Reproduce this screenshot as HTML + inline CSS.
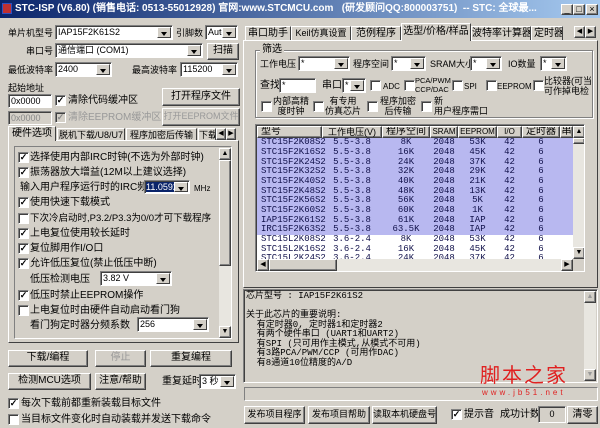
<!DOCTYPE html><html><head><meta charset="utf-8"><style>
*{box-sizing:border-box;margin:0;padding:0}
body{width:600px;height:428px;background:#d4d0c8;font:10px "Liberation Sans","WenQuanYi Zen Hei",sans-serif;color:#000;position:relative;overflow:hidden}
.a{position:absolute;white-space:nowrap;line-height:12px}
.btn{position:absolute;background:#d4d0c8;border:1px solid;border-color:#fff #404040 #404040 #fff;box-shadow:inset -1px -1px 0 #808080;text-align:center;font-size:10px;white-space:nowrap;overflow:hidden}
.sk{position:absolute;background:#fff;border:1px solid;border-color:#808080 #fff #fff #808080;box-shadow:inset 1px 1px 0 #404040;padding:1px 2px;font-size:9px;line-height:11px;white-space:nowrap;overflow:hidden}
.cb{position:absolute;width:11px;height:11px;background:#fff;border:1px solid;border-color:#808080 #fff #fff #808080;box-shadow:inset 1px 1px 0 #404040;font-size:9px;line-height:9px;text-align:center;font-weight:bold}
.ar{position:absolute;right:1px;top:1px;bottom:1px;width:14px;background:#d4d0c8;border:1px solid;border-color:#fff #404040 #404040 #fff}
.ar:after{content:"";position:absolute;left:3px;top:4px;border:3px solid transparent;border-top:4px solid #000}
.grp{position:absolute;border:1px solid #808080;box-shadow:1px 1px 0 #fff,inset 1px 1px 0 #fff}
.tab{position:absolute;background:#d4d0c8;border:1px solid;border-bottom:none;border-color:#fff #404040 #404040 #fff;text-align:center;font-size:10px;line-height:13px;white-space:nowrap;overflow:hidden}
table{border-collapse:collapse;font:9px "Liberation Mono","WenQuanYi Zen Hei",monospace}
td{height:9.67px;padding:0;text-align:center;line-height:9px;color:#10104a}
td:first-child{text-align:left;padding-left:4px}
tr.s td{background:#b8b8f0}
</style></head><body>
<div class="a" style="left:0;top:0;width:600px;height:18px;background:linear-gradient(90deg,#0a246a,#a6caf0)"></div>
<div class="a" style="left:2px;top:3px;width:10px;height:11px;background:#c03030;border:1px solid #3050c0"></div>
<div class="a" style="left:15px;top:3px;color:#fff;font-weight:bold;font-size:10px">STC-ISP (V6.80) (销售电话: 0513-55012928) 官网:www.STCMCU.com&nbsp;&nbsp; (研发顾问QQ:800003751)&nbsp; -- STC: 全球最...</div>
<div class="btn" style="left:561px;top:4px;width:12px;height:11px;font-size:9px;line-height:9px">_</div>
<div class="btn" style="left:573px;top:4px;width:12px;height:11px;font-size:9px;line-height:9px">□</div>
<div class="btn" style="left:586px;top:4px;width:12px;height:11px;font-size:9px;line-height:9px">×</div>

<div class="a" style="left:8px;top:27px;font-size:9px">单片机型号</div>
<div class="sk" style="left:55px;top:25px;width:118px;height:15px">IAP15F2K61S2<div class="ar"></div></div>
<div class="a" style="left:176px;top:27px;font-size:9px">引脚数</div>
<div class="sk" style="left:205px;top:25px;width:33px;height:15px">Auto<div class="ar"></div></div>
<div class="a" style="left:26px;top:45px;font-size:9px">串口号</div>
<div class="sk" style="left:55px;top:43px;width:148px;height:15px">通信端口 (COM1)<div class="ar"></div></div>
<div class="btn" style="left:207px;top:43px;width:32px;height:17px;line-height:14px">扫描</div>
<div class="a" style="left:8px;top:64px;font-size:9px">最低波特率</div>
<div class="sk" style="left:55px;top:62px;width:57px;height:15px">2400<div class="ar"></div></div>
<div class="a" style="left:132px;top:64px;font-size:9px">最高波特率</div>
<div class="sk" style="left:180px;top:62px;width:58px;height:15px">115200<div class="ar"></div></div>
<div class="a" style="left:8px;top:82px;font-size:9px">起始地址</div>
<div class="sk" style="left:8px;top:94px;width:44px;height:14px">0x0000</div>
<div class="cb" style="left:55px;top:95px">✓</div>
<div class="a" style="left:68px;top:95px">清除代码缓冲区</div>
<div class="btn" style="left:162px;top:88px;width:78px;height:18px;line-height:15px">打开程序文件</div>
<div class="sk" style="left:8px;top:111px;width:44px;height:14px;background:#d4d0c8;color:#888">0x0000</div>
<div class="cb" style="left:55px;top:112px;background:#d4d0c8;color:#888">✓</div>
<div class="a" style="left:68px;top:112px;color:#999">清除EEPROM缓冲区</div>
<div class="btn" style="left:162px;top:108px;width:78px;height:18px;line-height:15px;font-size:9px;color:#999">打开EEPROM文件</div>

<div class="tab" style="left:8px;top:126px;width:48px;height:15px;z-index:2">硬件选项</div>
<div class="tab" style="left:57px;top:128px;width:68px;height:13px;font-size:9px">脱机下载/U8/U7</div>
<div class="tab" style="left:126px;top:128px;width:71px;height:13px;font-size:9px">程序加密后传输</div>
<div class="tab" style="left:198px;top:128px;width:18px;height:13px;font-size:9px">下载</div>
<div class="btn" style="left:216px;top:128px;width:10px;height:12px;font-size:7px;line-height:10px">◀</div>
<div class="btn" style="left:226px;top:128px;width:10px;height:12px;font-size:7px;line-height:10px">▶</div>
<div class="a" style="left:8px;top:140px;width:231px;height:203px;border:1px solid;border-color:#fff #404040 #404040 #fff"></div>
<div class="a" style="left:14px;top:146px;width:218px;height:193px;border:1px solid;border-color:#808080 #fff #fff #808080"></div>
<div class="a" style="left:219px;top:148px;width:12px;height:190px;background:#e8e6e0"></div>
<div class="btn" style="left:219px;top:148px;width:12px;height:12px;font-size:7px;line-height:10px">▲</div>
<div class="btn" style="left:219px;top:160px;width:12px;height:106px"></div>
<div class="btn" style="left:219px;top:326px;width:12px;height:12px;font-size:7px;line-height:10px">▼</div>
<div class="cb" style="left:18px;top:152px">✓</div><div class="a" style="left:30px;top:152px">选择使用内部IRC时钟(不选为外部时钟)</div>
<div class="cb" style="left:18px;top:167px">✓</div><div class="a" style="left:30px;top:167px">振荡器放大增益(12M以上建议选择)</div>
<div class="a" style="left:20px;top:182px">输入用户程序运行时的IRC频率</div>
<div class="sk" style="left:144px;top:180px;width:46px;height:14px;padding:1px"><span style="background:#0a246a;color:#fff">11.0592</span><div class="ar"></div></div>
<div class="a" style="left:194px;top:183px;font-size:8px">MHz</div>
<div class="cb" style="left:18px;top:197px">✓</div><div class="a" style="left:30px;top:197px">使用快速下载模式</div>
<div class="cb" style="left:18px;top:213px"></div><div class="a" style="left:30px;top:213px;font-size:9.5px">下次冷启动时,P3.2/P3.3为0/0才可下载程序</div>
<div class="cb" style="left:18px;top:228px">✓</div><div class="a" style="left:30px;top:228px">上电复位使用较长延时</div>
<div class="cb" style="left:18px;top:243px">✓</div><div class="a" style="left:30px;top:243px">复位脚用作I/O口</div>
<div class="cb" style="left:18px;top:258px">✓</div><div class="a" style="left:30px;top:258px">允许低压复位(禁止低压中断)</div>
<div class="a" style="left:30px;top:274px">低压检测电压</div>
<div class="sk" style="left:100px;top:271px;width:72px;height:15px">3.82 V<div class="ar"></div></div>
<div class="cb" style="left:18px;top:290px">✓</div><div class="a" style="left:30px;top:290px">低压时禁止EEPROM操作</div>
<div class="cb" style="left:18px;top:305px"></div><div class="a" style="left:30px;top:305px">上电复位时由硬件自动启动看门狗</div>
<div class="a" style="left:30px;top:320px">看门狗定时器分频系数</div>
<div class="sk" style="left:137px;top:317px;width:72px;height:15px">256<div class="ar"></div></div>

<div class="btn" style="left:8px;top:350px;width:80px;height:17px;line-height:14px">下载/编程</div>
<div class="btn" style="left:95px;top:350px;width:51px;height:17px;line-height:14px;color:#999">停止</div>
<div class="btn" style="left:150px;top:350px;width:82px;height:17px;line-height:14px">重复编程</div>
<div class="btn" style="left:8px;top:373px;width:83px;height:17px;line-height:14px">检测MCU选项</div>
<div class="btn" style="left:95px;top:373px;width:51px;height:17px;line-height:14px">注意/帮助</div>
<div class="a" style="left:162px;top:376px">重复延时</div>
<div class="sk" style="left:199px;top:374px;width:37px;height:15px">3 秒<div class="ar"></div></div>
<div class="cb" style="left:8px;top:398px">✓</div><div class="a" style="left:21px;top:398px">每次下载前都重新装载目标文件</div>
<div class="cb" style="left:8px;top:414px"></div><div class="a" style="left:21px;top:414px">当目标文件变化时自动装载并发送下载命令</div>

<div class="tab" style="left:245px;top:26px;width:46px;height:14px">串口助手</div>
<div class="tab" style="left:291px;top:26px;width:60px;height:14px;font-size:9px">Keil仿真设置</div>
<div class="tab" style="left:351px;top:26px;width:50px;height:14px">范例程序</div>
<div class="tab" style="left:401px;top:23px;width:70px;height:18px;z-index:2;line-height:15px">选型/价格/样品</div>
<div class="tab" style="left:471px;top:26px;width:60px;height:14px">波特率计算器</div>
<div class="tab" style="left:531px;top:26px;width:32px;height:14px;text-align:left;padding-left:2px">定时器计</div>
<div class="btn" style="left:574px;top:26px;width:11px;height:12px;font-size:7px;line-height:10px">◀</div>
<div class="btn" style="left:585px;top:26px;width:11px;height:12px;font-size:7px;line-height:10px">▶</div>
<div class="a" style="left:243px;top:40px;width:355px;height:248px;border:1px solid;border-color:#fff #404040 #404040 #fff"></div>
<div class="grp" style="left:255px;top:50px;width:338px;height:68px"></div>
<div class="a" style="left:260px;top:44px;background:#d4d0c8;padding:0 2px">筛选</div>
<div class="a" style="left:260px;top:58px;font-size:9px">工作电压</div>
<div class="sk" style="left:298px;top:56px;width:52px;height:15px">*<div class="ar"></div></div>
<div class="a" style="left:353px;top:58px;font-size:9px">程序空间</div>
<div class="sk" style="left:391px;top:56px;width:35px;height:15px">*<div class="ar"></div></div>
<div class="a" style="left:430px;top:58px;font-size:9px">SRAM大小</div>
<div class="sk" style="left:470px;top:56px;width:32px;height:15px">*<div class="ar"></div></div>
<div class="a" style="left:508px;top:58px;font-size:9px">IO数量</div>
<div class="sk" style="left:540px;top:56px;width:27px;height:15px">*<div class="ar"></div></div>
<div class="a" style="left:260px;top:80px">查找</div>
<div class="sk" style="left:279px;top:78px;width:37px;height:15px">*</div>
<div class="a" style="left:322px;top:80px">串口</div>
<div class="sk" style="left:342px;top:78px;width:24px;height:15px">*<div class="ar"></div></div>
<div class="cb" style="left:370px;top:80px"></div><div class="a" style="left:383px;top:81px;font-size:8px">ADC</div>
<div class="cb" style="left:404px;top:80px"></div><div class="a" style="left:415px;top:76px;font-size:7.5px;line-height:9px">PCA/PWM<br>CCP/DAC</div>
<div class="cb" style="left:452px;top:80px"></div><div class="a" style="left:464px;top:81px;font-size:8px">SPI</div>
<div class="cb" style="left:486px;top:80px"></div><div class="a" style="left:497px;top:81px;font-size:8px">EEPROM</div>
<div class="cb" style="left:533px;top:80px"></div><div class="a" style="left:544px;top:76px;line-height:10px;font-size:9px">比较器(可当<br>可作掉电检</div>
<div class="cb" style="left:261px;top:101px"></div><div class="a" style="left:273px;top:96px;line-height:10px;font-size:9px;text-align:center">内部高精<br>度时钟</div>
<div class="cb" style="left:313px;top:101px"></div><div class="a" style="left:325px;top:96px;line-height:10px;font-size:9px;text-align:center">有专用<br>仿真芯片</div>
<div class="cb" style="left:367px;top:101px"></div><div class="a" style="left:380px;top:96px;line-height:10px;font-size:9px;text-align:center">程序加密<br>后传输</div>
<div class="cb" style="left:421px;top:101px"></div><div class="a" style="left:434px;top:96px;line-height:10px;font-size:9px">新<br>用户程序需口</div>

<div class="a" style="left:255px;top:124px;width:330px;height:148px;background:#fff;border:1px solid;border-color:#808080 #fff #fff #808080;box-shadow:inset 1px 1px 0 #404040;overflow:hidden">
<div style="position:absolute;left:1px;top:1px;width:316px;height:12px;display:flex;font-size:10px;line-height:10px">
<div class="btn" style="position:static;width:65px;text-align:left;padding-left:3px">型号</div><div class="btn" style="position:static;width:60px;font-size:9px">工作电压(V)</div><div class="btn" style="position:static;width:48px">程序空间</div><div class="btn" style="position:static;width:28px;font-size:8px">SRAM</div><div class="btn" style="position:static;width:39px;font-size:8px">EEPROM</div><div class="btn" style="position:static;width:25px;font-size:8px">I/O</div><div class="btn" style="position:static;width:38px">定时器</div><div class="btn" style="position:static;width:13px">串</div></div>
<table style="position:absolute;left:1px;top:13px;width:316px;table-layout:fixed">
<colgroup><col style="width:65px"><col style="width:60px"><col style="width:48px"><col style="width:28px"><col style="width:39px"><col style="width:25px"><col style="width:38px"><col style="width:13px"></colgroup>
<tr class="s"><td>STC15F2K08S2</td><td>5.5-3.8</td><td>8K</td><td>2048</td><td>53K</td><td>42</td><td>6</td><td></td></tr>
<tr class="s"><td>STC15F2K16S2</td><td>5.5-3.8</td><td>16K</td><td>2048</td><td>45K</td><td>42</td><td>6</td><td></td></tr>
<tr class="s"><td>STC15F2K24S2</td><td>5.5-3.8</td><td>24K</td><td>2048</td><td>37K</td><td>42</td><td>6</td><td></td></tr>
<tr class="s"><td>STC15F2K32S2</td><td>5.5-3.8</td><td>32K</td><td>2048</td><td>29K</td><td>42</td><td>6</td><td></td></tr>
<tr class="s"><td>STC15F2K40S2</td><td>5.5-3.8</td><td>40K</td><td>2048</td><td>21K</td><td>42</td><td>6</td><td></td></tr>
<tr class="s"><td>STC15F2K48S2</td><td>5.5-3.8</td><td>48K</td><td>2048</td><td>13K</td><td>42</td><td>6</td><td></td></tr>
<tr class="s"><td>STC15F2K56S2</td><td>5.5-3.8</td><td>56K</td><td>2048</td><td>5K</td><td>42</td><td>6</td><td></td></tr>
<tr class="s"><td>STC15F2K60S2</td><td>5.5-3.8</td><td>60K</td><td>2048</td><td>1K</td><td>42</td><td>6</td><td></td></tr>
<tr class="s"><td>IAP15F2K61S2</td><td>5.5-3.8</td><td>61K</td><td>2048</td><td>IAP</td><td>42</td><td>6</td><td></td></tr>
<tr class="s"><td>IRC15F2K63S2</td><td>5.5-3.8</td><td>63.5K</td><td>2048</td><td>IAP</td><td>42</td><td>6</td><td></td></tr>
<tr><td>STC15L2K08S2</td><td>3.6-2.4</td><td>8K</td><td>2048</td><td>53K</td><td>42</td><td>6</td><td></td></tr>
<tr><td>STC15L2K16S2</td><td>3.6-2.4</td><td>16K</td><td>2048</td><td>45K</td><td>42</td><td>6</td><td></td></tr>
<tr><td>STC15L2K24S2</td><td>3.6-2.4</td><td>24K</td><td>2048</td><td>37K</td><td>42</td><td>6</td><td></td></tr>
</table>
<div style="position:absolute;left:317px;top:1px;width:12px;height:133px;background:#e8e6e0"></div>
<div class="btn" style="left:317px;top:1px;width:12px;height:12px;font-size:7px;line-height:10px">▲</div>
<div class="btn" style="left:317px;top:13px;width:12px;height:6px"></div>
<div class="btn" style="left:317px;top:122px;width:12px;height:12px;font-size:7px;line-height:10px">▼</div>
<div style="position:absolute;left:1px;top:134px;width:328px;height:12px;background:#e8e6e0"></div>
<div class="btn" style="left:1px;top:134px;width:12px;height:12px;font-size:7px;line-height:10px">◀</div>
<div class="btn" style="left:13px;top:134px;width:68px;height:12px"></div>
<div class="btn" style="left:305px;top:134px;width:12px;height:12px;font-size:7px;line-height:10px">▶</div>
<div style="position:absolute;left:317px;top:134px;width:12px;height:12px;background:#d4d0c8"></div>
</div>

<div class="a" style="left:243px;top:289px;width:355px;height:94px;background:#d4d0c8;border:1px solid;border-color:#808080 #fff #fff #808080;box-shadow:inset 1px 1px 0 #404040"></div>
<div class="a" style="left:246px;top:292px;font-size:9px;line-height:9.5px;font-family:'Liberation Mono','WenQuanYi Zen Hei',monospace">芯片型号 : IAP15F2K61S2<br><br>关于此芯片的重要说明:<br>&nbsp; 有定时器0, 定时器1和定时器2<br>&nbsp; 有两个硬件串口 (UART1和UART2)<br>&nbsp; 有SPI (只可用作主模式,从模式不可用)<br>&nbsp; 有3路PCA/PWM/CCP (可用作DAC)<br>&nbsp; 有8通道10位精度的A/D</div>
<div class="a" style="left:584px;top:291px;width:12px;height:90px;background:#e8e6e0"></div>
<div class="btn" style="left:584px;top:291px;width:12px;height:12px;font-size:7px;line-height:10px;color:#999">▲</div>
<div class="btn" style="left:584px;top:369px;width:12px;height:12px;font-size:7px;line-height:10px;color:#999">▼</div>
<div class="a" style="left:480px;top:365px;color:#e02020;font-size:20px;line-height:22px;letter-spacing:2px">脚本之家</div>
<div class="a" style="left:482px;top:387px;color:#e02020;font-size:8px;letter-spacing:3px">www.jb51.net</div>
<div class="a" style="left:244px;top:387px;width:354px;height:14px;border:1px solid;border-color:#808080 #fff #fff #808080"></div>
<div class="btn" style="left:244px;top:406px;width:61px;height:18px;line-height:15px;font-size:9px">发布项目程序</div>
<div class="btn" style="left:308px;top:406px;width:62px;height:18px;line-height:15px;font-size:9px">发布项目帮助</div>
<div class="btn" style="left:372px;top:406px;width:65px;height:18px;line-height:15px;font-size:9px">读取本机硬盘号</div>
<div class="cb" style="left:451px;top:409px">✓</div><div class="a" style="left:464px;top:409px">提示音</div>
<div class="a" style="left:500px;top:409px">成功计数</div>
<div class="sk" style="left:538px;top:406px;width:28px;height:17px;background:#d4d0c8;text-align:center;line-height:13px">0</div>
<div class="btn" style="left:567px;top:406px;width:31px;height:18px;line-height:15px">清零</div>
</body></html>
